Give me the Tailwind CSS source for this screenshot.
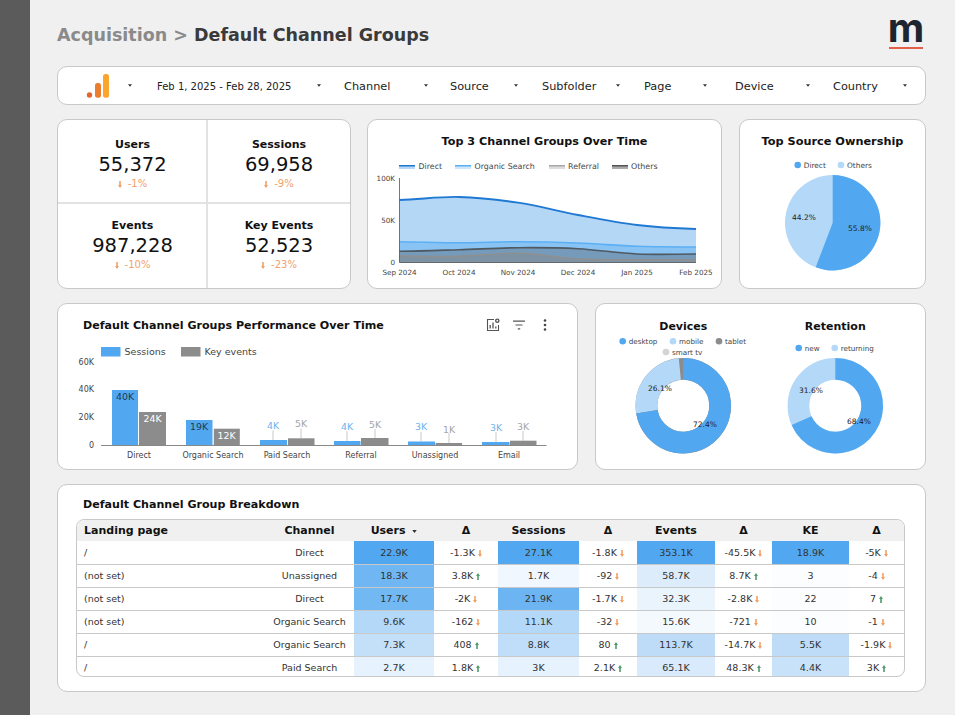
<!DOCTYPE html>
<html lang="en">
<head>
    <meta charset="UTF-8">
    <title>Acquisition - Default Channel Groups</title>
    <script src="https://cdn.jsdelivr.net/npm/@tailwindcss/browser@4"></script>
</head>
<body class="bg-[#f0f0f0] font-['DejaVu_Sans',sans-serif] text-[#111]">
<div class="flex h-[715px] w-[955px] overflow-hidden">

    <!-- Sidebar -->
    <div class="w-[30px] shrink-0 bg-[#5b5b5b]"></div>

    <main class="w-[925px] pl-[27px] pr-[29px]">

        <!-- Header -->
        <header class="flex h-[66px] items-start justify-between">
            <h1 class="mt-[23px] text-[17.5px] leading-[24px] font-bold text-[#3a3a3a]"><span class="text-[#8a8a8a]">Acquisition &gt;</span> Default Channel Groups</h1>
            <div class="mr-[2px] mt-[8px] flex w-[36px] flex-col items-center">
                <span class="h-[40px] font-['Inter',sans-serif] text-[40px] leading-[40px] font-bold text-[#1c2630]">m</span>
                <span class="mt-[-1px] h-[2px] w-[34px] bg-[#e2604a]"></span>
            </div>
        </header>

        <!-- Filter bar -->
        <div class="flex h-[39px] items-center rounded-[10px] border border-[#c8c8c8] bg-white text-[11.3px] text-[#222]">
            <div class="flex w-[99px] items-center pl-[28px]">
                <svg class="h-[24px] w-[24px]" viewBox="0 0 24 24">
                    <circle cx="3.5" cy="21" r="2.7" fill="#e3672b"/>
                    <rect x="9" y="9" width="6" height="14.7" rx="2.5" fill="#ea7e2e"/>
                    <rect x="17" y="0" width="6" height="23.7" rx="2.5" fill="#f9a52e"/>
                </svg>
                <svg class="ml-[18px] h-[3px] w-[4px]" viewBox="0 0 6 4"><path d="M0 0h6L3 4z" fill="#333"/></svg>
            </div>
            <div class="flex w-[187px] items-center justify-between pr-[23px] text-[10px]"><span class="pt-[2px]">Feb 1, 2025 - Feb 28, 2025</span><svg class="h-[3px] w-[4px]" viewBox="0 0 6 4"><path d="M0 0h6L3 4z" fill="#333"/></svg></div>
            <div class="flex w-[106px] items-center justify-between pr-[22px]"><span class="pt-[3px]">Channel</span><svg class="h-[3px] w-[4px]" viewBox="0 0 6 4"><path d="M0 0h6L3 4z" fill="#333"/></svg></div>
            <div class="flex w-[92px] items-center justify-between pr-[24px]"><span class="pt-[3px]">Source</span><svg class="h-[3px] w-[4px]" viewBox="0 0 6 4"><path d="M0 0h6L3 4z" fill="#333"/></svg></div>
            <div class="flex w-[102px] items-center justify-between pr-[24px]"><span class="pt-[3px]">Subfolder</span><svg class="h-[3px] w-[4px]" viewBox="0 0 6 4"><path d="M0 0h6L3 4z" fill="#333"/></svg></div>
            <div class="flex w-[91px] items-center justify-between pr-[28px]"><span class="pt-[3px]">Page</span><svg class="h-[3px] w-[4px]" viewBox="0 0 6 4"><path d="M0 0h6L3 4z" fill="#333"/></svg></div>
            <div class="flex w-[98px] items-center justify-between pr-[23px]"><span class="pt-[3px]">Device</span><svg class="h-[3px] w-[4px]" viewBox="0 0 6 4"><path d="M0 0h6L3 4z" fill="#333"/></svg></div>
            <div class="flex w-[74px] items-center justify-between"><span class="pt-[3px]">Country</span><svg class="h-[3px] w-[4px]" viewBox="0 0 6 4"><path d="M0 0h6L3 4z" fill="#333"/></svg></div>
        </div>

        <!-- Row 1 -->
        <div class="mt-[14px] flex h-[170px] gap-x-[16px]">

            <!-- KPIs -->
            <div class="grid w-[294px] grid-cols-[150px_1fr] grid-rows-[84px_1fr] overflow-hidden rounded-[10px] border border-[#c8c8c8] bg-white text-center">
                <div class="border-r-2 border-b-2 border-[#e2e2e2] pl-[1px] pt-[17px]">
                    <div class="text-[11px] leading-[16px] font-bold">Users</div>
                    <div class="text-[19.5px] leading-[24px]">55,372</div>
                    <div class="mt-[1px] flex items-center justify-center gap-x-[6px] text-[10px] leading-[12px] text-[#f0a26c]"><svg class="h-[7px] w-[4px]" viewBox="0 0 4 7"><path d="M1.2 0h1.6v4H4L2 7 0 4h1.2z" fill="#f0a064"/></svg>-1%</div>
                </div>
                <div class="border-b-2 border-[#e2e2e2] pt-[17px]">
                    <div class="text-[11px] leading-[16px] font-bold">Sessions</div>
                    <div class="text-[19.5px] leading-[24px]">69,958</div>
                    <div class="mt-[1px] flex items-center justify-center gap-x-[6px] text-[10px] leading-[12px] text-[#f0a26c]"><svg class="h-[7px] w-[4px]" viewBox="0 0 4 7"><path d="M1.2 0h1.6v4H4L2 7 0 4h1.2z" fill="#f0a064"/></svg>-9%</div>
                </div>
                <div class="border-r-2 border-[#e2e2e2] pl-[1px] pt-[14px]">
                    <div class="text-[11px] leading-[16px] font-bold">Events</div>
                    <div class="text-[19.5px] leading-[24px]">987,228</div>
                    <div class="mt-[1px] flex items-center justify-center gap-x-[6px] text-[10px] leading-[12px] text-[#f0a26c]"><svg class="h-[7px] w-[4px]" viewBox="0 0 4 7"><path d="M1.2 0h1.6v4H4L2 7 0 4h1.2z" fill="#f0a064"/></svg>-10%</div>
                </div>
                <div class="pt-[14px]">
                    <div class="text-[11px] leading-[16px] font-bold">Key Events</div>
                    <div class="text-[19.5px] leading-[24px]">52,523</div>
                    <div class="mt-[1px] flex items-center justify-center gap-x-[6px] text-[10px] leading-[12px] text-[#f0a26c]"><svg class="h-[7px] w-[4px]" viewBox="0 0 4 7"><path d="M1.2 0h1.6v4H4L2 7 0 4h1.2z" fill="#f0a064"/></svg>-23%</div>
                </div>
            </div>

            <!-- Area chart -->
            <div class="w-[355px] overflow-hidden rounded-[10px] border border-[#c8c8c8] bg-white">
                <h3 class="h-[35px] pt-[14px] text-center text-[11.2px] leading-[16px] font-bold">Top 3 Channel Groups Over Time</h3>
                <svg class="block" width="353" height="133" viewBox="368 155 353 133" font-size="7.2" fill="#444">
                    <path id="a-direct" fill="#4d9fe8" fill-opacity=".42"/>
                    <path id="a-organic" fill="#4fa8f1" fill-opacity=".42"/>
                    <path id="a-others" fill="#555" fill-opacity=".36"/>
                    <path id="a-referral" fill="#888" fill-opacity=".45"/>
                    <path id="l-direct" fill="none" stroke="#1f78d2" stroke-width="1.8"/>
                    <path id="l-organic" fill="none" stroke="#5bb0f5" stroke-width="1.6"/>
                    <path id="l-referral" fill="none" stroke="#8f8f8f" stroke-width="1.4"/>
                    <path id="l-others" fill="none" stroke="#4f5962" stroke-width="1.6"/>
                    <path d="M399.5 178V262.5H696" fill="none" stroke="#555" stroke-width=".8"/>
                    <!-- legend -->
                    <rect x="399" y="166" width="16" height="3" fill="#b6d7f5"/><rect x="399" y="165" width="16" height="1.5" fill="#1f78d2"/>
                    <rect x="455" y="166" width="16" height="3" fill="#cfe6fb"/><rect x="455" y="165" width="16" height="1.5" fill="#5bb0f5"/>
                    <rect x="549" y="166" width="16" height="3" fill="#dcdcdc"/><rect x="549" y="165" width="16" height="1.5" fill="#a8a8a8"/>
                    <rect x="612" y="166" width="16" height="3" fill="#aaa"/><rect x="612" y="165" width="16" height="1.5" fill="#555"/>
                    <g font-size="7.9">
                        <text x="418.5" y="169">Direct</text>
                        <text x="474.5" y="169">Organic Search</text>
                        <text x="568" y="169">Referral</text>
                        <text x="631" y="169">Others</text>
                    </g>
                    <g text-anchor="end">
                        <text x="395" y="181">100K</text>
                        <text x="395" y="223">50K</text>
                        <text x="395" y="265">0</text>
                    </g>
                    <g text-anchor="middle">
                        <text x="399.5" y="275">Sep 2024</text>
                        <text x="459" y="275">Oct 2024</text>
                        <text x="518" y="275">Nov 2024</text>
                        <text x="578" y="275">Dec 2024</text>
                        <text x="637" y="275">Jan 2025</text>
                        <text x="696" y="275">Feb 2025</text>
                    </g>
                </svg>
            </div>

            <!-- Top source -->
            <div class="ml-[1px] w-[187px] overflow-hidden rounded-[10px] border border-[#c8c8c8] bg-white">
                <h3 class="h-[35px] pt-[14px] text-center text-[11.3px] leading-[16px] font-bold">Top Source Ownership</h3>
                <svg class="block" width="185" height="133" viewBox="740 155 185 133" font-size="7.4" fill="#444">
                    <circle cx="797.7" cy="165" r="3.3" fill="#52a8f0"/>
                    <text x="803.7" y="168">Direct</text>
                    <circle cx="841" cy="165" r="3.3" fill="#b3d8f8"/>
                    <text x="847" y="168">Others</text>
                    <circle cx="832.7" cy="222.7" r="47.7" fill="#b3d8f8"/>
                    <path d="M832.7 222.7V175A47.7 47.7 0 1 1 815.7 267.27Z" fill="#52a8f0"/>
                    <g text-anchor="middle" fill="#222" font-size="7.5">
                        <text x="804" y="220">44.2%</text>
                        <text x="860" y="231">55.8%</text>
                    </g>
                </svg>
            </div>
        </div>

        <!-- Row 2 -->
        <div class="mt-[14px] flex h-[167px] gap-x-[17px]">

            <!-- Bars -->
            <div class="w-[521px] overflow-hidden rounded-[10px] border border-[#c8c8c8] bg-white">
                <div class="flex h-[34px] items-start justify-between pl-[25px] pr-[30px] pt-[14px]">
                    <h3 class="text-[11.1px] leading-[16px] font-bold">Default Channel Groups Performance Over Time</h3>
                    <div class="flex items-center gap-x-[12px]">
                        <svg class="h-[14px] w-[14px]" viewBox="0 0 14 14" fill="none" stroke="#555" stroke-width="1.1">
                            <path d="M8 1.5H1.5v11h11V7"/>
                            <path d="M4.2 10.5V7M7 10.5V4.5M9.8 10.5V8.5" stroke-width="1.3"/>
                            <circle cx="11.3" cy="2.7" r="1.6" stroke-width="1.4"/>
                        </svg>
                        <svg class="h-[14px] w-[14px]" viewBox="0 0 14 14" fill="none" stroke="#555" stroke-width="1.2">
                            <path d="M1 3.2h12M3.5 7h7M5.8 10.8h2.4"/>
                        </svg>
                        <svg class="ml-[5px] h-[14px] w-[4px]" viewBox="0 0 4 14" fill="#444">
                            <circle cx="2" cy="2.5" r="1.3"/><circle cx="2" cy="7" r="1.3"/><circle cx="2" cy="11.5" r="1.3"/>
                        </svg>
                    </div>
                </div>
                <svg class="block" width="519" height="131" viewBox="58 338 519 131" font-size="8" fill="#444">
                    <rect x="101" y="347" width="19.5" height="9.5" fill="#52a8f0"/>
                    <text x="124.5" y="355" font-size="9.5">Sessions</text>
                    <rect x="181" y="347" width="19.5" height="9.5" fill="#8c8c8c"/>
                    <text x="204.5" y="355" font-size="9.5">Key events</text>
                    <g text-anchor="end">
                        <text x="94" y="365">60K</text>
                        <text x="94" y="392">40K</text>
                        <text x="94" y="420">20K</text>
                        <text x="94" y="448">0</text>
                    </g>
                    <g fill="#52a8f0">
                        <rect x="112" y="390" width="26" height="55"/>
                        <rect x="186" y="420" width="26.5" height="25"/>
                        <rect x="260" y="440" width="27" height="5"/>
                        <rect x="334" y="441" width="26.5" height="4"/>
                        <rect x="408" y="441.5" width="27" height="3.5"/>
                        <rect x="482" y="442" width="27.5" height="3"/>
                    </g>
                    <g fill="#8c8c8c">
                        <rect x="139" y="412" width="27" height="33"/>
                        <rect x="213.8" y="428.7" width="26" height="16.3"/>
                        <rect x="288" y="438.3" width="26.5" height="6.7"/>
                        <rect x="361" y="438" width="27.5" height="7"/>
                        <rect x="435.6" y="443" width="26.5" height="2"/>
                        <rect x="510" y="440.7" width="26.5" height="4.3"/>
                    </g>
                    <path d="M101 445.5H546.5" stroke="#888" stroke-width="1"/>
                    <g stroke="#bbb" stroke-width=".8">
                        <path d="M273 430.5V440M301 428.5V438M347 431V441M375 429V438M421 432V441.5M449 433V443M496 432V442M523 431V440.7"/>
                    </g>
                    <g text-anchor="middle" font-size="9.4">
                        <text x="125" y="400" fill="#1f3a52">40K</text>
                        <text x="152.5" y="422" fill="#fff">24K</text>
                        <text x="199" y="430" fill="#1f3a52">19K</text>
                        <text x="226.5" y="438.5" fill="#fff">12K</text>
                        <g fill="#6cb3ef">
                            <text x="273" y="429">4K</text>
                            <text x="347" y="430">4K</text>
                            <text x="421" y="430">3K</text>
                            <text x="496" y="431">3K</text>
                        </g>
                        <g fill="#a5a5a5">
                            <text x="301" y="427">5K</text>
                            <text x="375" y="427.5">5K</text>
                            <text x="449" y="432.5">1K</text>
                            <text x="523" y="430">3K</text>
                        </g>
                    </g>
                    <g text-anchor="middle">
                        <text x="139" y="458">Direct</text>
                        <text x="213" y="458">Organic Search</text>
                        <text x="287" y="458">Paid Search</text>
                        <text x="361" y="458">Referral</text>
                        <text x="435" y="458">Unassigned</text>
                        <text x="509" y="458">Email</text>
                    </g>
                </svg>
            </div>

            <!-- Donuts -->
            <div class="w-[331px] overflow-hidden rounded-[10px] border border-[#c8c8c8] bg-white">
                <svg class="block" width="329" height="165" viewBox="596 304 329 165" font-size="7.2" fill="#444">
                    <g text-anchor="middle" font-size="11" font-weight="700" fill="#111">
                        <text x="683.3" y="330">Devices</text>
                        <text x="835.3" y="330">Retention</text>
                    </g>
                    <circle cx="622.7" cy="341.3" r="3.3" fill="#52a8f0"/><text x="628.7" y="344">desktop</text>
                    <circle cx="673" cy="341.3" r="3.3" fill="#b3d8f8"/><text x="679" y="344">mobile</text>
                    <circle cx="719" cy="341.3" r="3.3" fill="#8c8c8c"/><text x="725" y="344">tablet</text>
                    <circle cx="666" cy="352" r="3.3" fill="#d4d4d4"/><text x="672" y="355">smart tv</text>
                    <circle cx="798.7" cy="348" r="3.3" fill="#52a8f0"/><text x="804.7" y="351">new</text>
                    <circle cx="834.7" cy="348" r="3.3" fill="#b3d8f8"/><text x="840.7" y="351">returning</text>

                    <g fill="none" stroke-width="21.7">
                        <circle cx="683.3" cy="405.7" r="36.85" stroke="#8c8c8c"/>
                        <path d="M646.94 411.7A36.85 36.85 0 0 1 679.83 369.01" stroke="#b3d8f8"/>
                        <path d="M683.3 368.85A36.85 36.85 0 1 1 646.94 411.7" stroke="#52a8f0"/>
                        <circle cx="835.3" cy="405.7" r="36.85" stroke="#b3d8f8"/>
                        <path d="M835.3 368.85A36.85 36.85 0 1 1 801.57 420.55" stroke="#52a8f0"/>
                    </g>
                    <g text-anchor="middle" fill="#222" font-size="7.5">
                        <text x="660" y="391">26.1%</text>
                        <text x="705" y="427">72.4%</text>
                        <text x="811" y="393">31.6%</text>
                        <text x="859" y="424">68.4%</text>
                    </g>
                </svg>
            </div>
        </div>

        <!-- Table -->
        <div class="mt-[14px] h-[208px] rounded-[10px] border border-[#c8c8c8] bg-white">
            <h3 class="h-[34px] pl-[25px] pt-[12px] text-[11.1px] leading-[16px] font-bold">Default Channel Group Breakdown</h3>
            <div class="ml-[18px] h-[158px] w-[829px] overflow-hidden rounded-[8px] border border-[#c8c8c8]">
                <table class="w-full table-fixed border-collapse text-center text-[9.5px] text-[#333] [&_td]:pt-[2px] [&_th]:pt-[2px]">
                    <colgroup>
                        <col class="w-[188px]"><col class="w-[89px]"><col class="w-[80px]"><col class="w-[64px]"><col class="w-[81px]"><col class="w-[58px]"><col class="w-[78px]"><col class="w-[57px]"><col class="w-[77px]"><col>
                    </colgroup>
                    <thead class="bg-[#f0f0f0] text-[11px] font-bold text-[#111]">
                        <tr class="h-[21px]">
                            <th class="pl-[7px] text-left">Landing page</th>
                            <th>Channel</th>
                            <th>Users <svg class="ml-[3px] inline h-[3px] w-[5px] align-middle" viewBox="0 0 6 4"><path d="M0 0h6L3 4z" fill="#333"/></svg></th>
                            <th>Δ</th><th>Sessions</th><th>Δ</th><th>Events</th><th>Δ</th><th>KE</th><th>Δ</th>
                        </tr>
                    </thead>
                    <tbody id="rows"></tbody>
                </table>
            </div>
        </div>
    </main>
</div>

<script>
    // [page, channel, users, Δ, sessions, Δ, events, Δ, ke, Δ] with heat colour per metric
    const rows = [
        ['/', 'Direct', ['22.9K', '#52a8f0'], '-1.3K', ['27.1K', '#52a8f0'], '-1.8K', ['353.1K', '#52a8f0'], '-45.5K', ['18.9K', '#52a8f0'], '-5K'],
        ['(not set)', 'Unassigned', ['18.3K', '#6fb6f3'], '3.8K', ['1.7K', '#f0f7fe'], '-92', ['58.7K', '#dcecfb'], '8.7K', ['3', '#fbfdff'], '-4'],
        ['(not set)', 'Direct', ['17.7K', '#72b8f3'], '-2K', ['21.9K', '#6db5f2'], '-1.7K', ['32.3K', '#eaf4fd'], '-2.8K', ['22', '#fbfdff'], '7'],
        ['(not set)', 'Organic Search', ['9.6K', '#b3d8f8'], '-162', ['11.1K', '#b3d8f8'], '-32', ['15.6K', '#f4f9fe'], '-721', ['10', '#fbfdff'], '-1'],
        ['/', 'Organic Search', ['7.3K', '#c4e0f9'], '408', ['8.8K', '#c0def9'], '80', ['113.7K', '#bedcf8'], '-14.7K', ['5.5K', '#bedcf8'], '-1.9K'],
        ['/', 'Paid Search', ['2.7K', '#e6f2fd'], '1.8K', ['3K', '#e6f2fd'], '2.1K', ['65.1K', '#d8eafb'], '48.3K', ['4.4K', '#c8e2f9'], '3K'],
    ];

    const down = '<svg class="ml-[3px] inline h-[7px] w-[4px]" viewBox="0 0 4 7"><path d="M1.2 0h1.6v4H4L2 7 0 4h1.2z" fill="#f0a064"/></svg>';
    const up = '<svg class="ml-[3px] inline h-[7px] w-[4px]" viewBox="0 0 4 7"><path d="M1.2 7h1.6V3H4L2 0 0 3h1.2z" fill="#4f9a6c"/></svg>';

    document.getElementById('rows').innerHTML = rows.map((r, i) => {
        const cells = r.slice(2).map(c => Array.isArray(c)
            ? `<td style="background:${c[1]}">${c[0]}</td>`
            : `<td>${c}${c[0] === '-' ? down : up}</td>`).join('');
        return `<tr class="${i === 5 ? 'h-[22px]' : 'h-[23px] border-b border-[#c8c8c8]'}"><td class="pl-[7px] text-left">${r[0]}</td><td>${r[1]}</td>${cells}</tr>`;
    }).join('');

    // Smooth lines for the area chart
    const xs = [399.5, 459, 518, 578, 637, 696];
    const series = {
        direct: [200, 197, 202.7, 215, 225, 229],
        organic: [241.7, 242.7, 241.7, 243, 246.3, 247],
        others: [251.3, 249.7, 247.7, 248.7, 254, 254],
        referral: [256, 256.3, 253.3, 259, 259.7, 259.7],
    };

    function smooth(ys) {
        let d = `M${xs[0]} ${ys[0]}`;
        for (let i = 0; i < xs.length - 1; i++) {
            const y0 = ys[i - 1] ?? ys[i], y3 = ys[i + 2] ?? ys[i + 1];
            const dx = (xs[i + 1] - xs[i]) / 3;
            d += `C${xs[i] + dx} ${ys[i] + (ys[i + 1] - y0) / 6} ${xs[i + 1] - dx} ${ys[i + 1] - (y3 - ys[i]) / 6} ${xs[i + 1]} ${ys[i + 1]}`;
        }
        return d;
    }

    Object.entries(series).forEach(([name, ys]) => {
        const line = smooth(ys);
        document.getElementById('l-' + name).setAttribute('d', line);
        document.getElementById('a-' + name).setAttribute('d', `${line}V262.5H${xs[0]}Z`);
    });
</script>
</body>
</html>
